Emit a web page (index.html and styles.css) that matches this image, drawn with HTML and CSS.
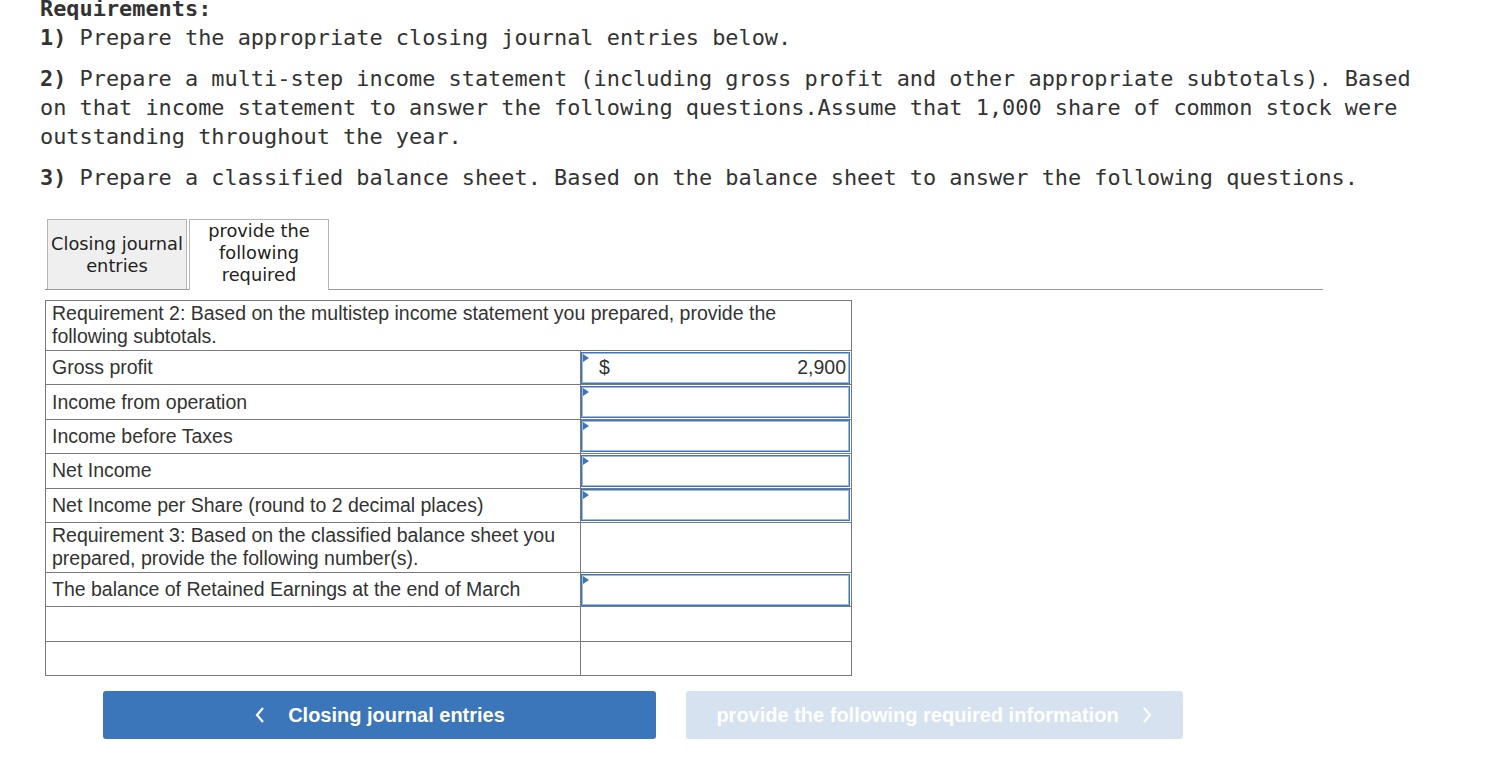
FILE: index.html
```html
<!DOCTYPE html>
<html>
<head>
<meta charset="utf-8">
<link rel="stylesheet" href="styles.css">
</head>
<body>
<div class="req">
  <p class="req-line"><b>Requirements:</b><br><b>1)</b> Prepare the appropriate closing journal entries below.</p>
  <p class="req-line"><b>2)</b> Prepare a multi-step income statement (including gross profit and other appropriate subtotals). Based<br>on that income statement to answer the following questions.Assume that 1,000 share of common stock were<br>outstanding throughout the year.</p>
  <p class="req-line"><b>3)</b> Prepare a classified balance sheet. Based on the balance sheet to answer the following questions.</p>
</div>

<div class="tabs">
  <div class="tab">Closing journal<br>entries</div>
  <div class="tab active">provide the<br>following<br>required</div>
</div>

<table class="grid">
  <colgroup>
    <col class="c1">
    <col class="c2">
  </colgroup>
  <tr class="tall">
    <td colspan="2" class="txt">Requirement 2: Based on the multistep income statement you prepared, provide the<br>following subtotals.</td>
  </tr>
  <tr>
    <td class="label">Gross profit</td>
    <td class="inp"><div class="field"><span class="flag"></span><span class="cur">$</span><span class="val">2,900</span></div></td>
  </tr>
  <tr>
    <td class="label">Income from operation</td>
    <td class="inp"><div class="field"><span class="flag"></span></div></td>
  </tr>
  <tr>
    <td class="label">Income before Taxes</td>
    <td class="inp"><div class="field"><span class="flag"></span></div></td>
  </tr>
  <tr>
    <td class="label">Net Income</td>
    <td class="inp"><div class="field"><span class="flag"></span></div></td>
  </tr>
  <tr>
    <td class="label">Net Income per Share (round to 2 decimal places)</td>
    <td class="inp"><div class="field"><span class="flag"></span></div></td>
  </tr>
  <tr class="tall">
    <td class="txt">Requirement 3: Based on the classified balance sheet you<br>prepared, provide the following number(s).</td>
    <td></td>
  </tr>
  <tr>
    <td class="label">The balance of Retained Earnings at the end of March</td>
    <td class="inp"><div class="field"><span class="flag"></span></div></td>
  </tr>
  <tr>
    <td class="label"></td>
    <td></td>
  </tr>
  <tr>
    <td class="label"></td>
    <td></td>
  </tr>
</table>

<div class="nav">
  <div class="btn prev">
    <svg class="chev" width="12" height="18" viewBox="0 0 12 18"><path d="M9 2 L3 9 L9 16" fill="none" stroke="#fff" stroke-width="2.2"/></svg>
    <span>Closing journal entries</span>
  </div>
  <div class="btn next">
    <span>provide the following required information</span>
    <svg class="chev" width="12" height="18" viewBox="0 0 12 18"><path d="M3 2 L9 9 L3 16" fill="none" stroke="#fff" stroke-width="2.2"/></svg>
  </div>
</div>
</body>
</html>
```

FILE: styles.css
```css
html, body {
  margin: 0;
  padding: 0;
  background: #fff;
}

.req {
  margin-top: -6px;
  padding-left: 40px;
  font-family: "DejaVu Sans Mono", "Liberation Mono", monospace;
  font-size: 21.9px;
  line-height: 29px;
  color: #333;
  white-space: nowrap;
}

.req-line {
  margin: 0 0 12px 0;
}

.req b {
  font-weight: bold;
}

.tabs {
  display: flex;
  align-items: flex-end;
  margin: 27px 0 0 45px;
  width: 1276px;
  height: 70px;
  border-bottom: 1px solid #999;
  padding-left: 2px;
  gap: 2px;
  font-family: "DejaVu Sans", Verdana, sans-serif;
  font-size: 17.8px;
  line-height: 22px;
  color: #222;
}

.tab {
  box-sizing: border-box;
  width: 140px;
  height: 70px;
  display: flex;
  align-items: center;
  justify-content: center;
  text-align: center;
  background: #efefef;
  border: 1px solid #b5b5b5;
  border-bottom: none;
  white-space: nowrap;
}

.tab.active {
  background: #fff;
  height: 71px;
  margin-bottom: -1px;
  padding-bottom: 4px;
}

.grid {
  margin: 10px 0 0 45px;
  border-collapse: collapse;
  width: 806px;
  font-family: "Liberation Sans", Arial, sans-serif;
  font-size: 19.5px;
  color: #333;
  table-layout: fixed;
}

.grid col.c1 {
  width: 535px;
}

.grid col.c2 {
  width: 271px;
}

.grid td {
  border: 1px solid #7a7a7a;
  padding: 0;
  height: 34.4px;
  box-sizing: border-box;
  white-space: nowrap;
}

.grid tr.tall td {
  height: 50px;
}

.grid td.txt {
  padding: 1px 6px 2px 6px;
  line-height: 23px;
  vertical-align: top;
}

.grid td.label {
  padding: 0 6px;
  vertical-align: middle;
}

.grid td.inp {
  padding: 0;
  vertical-align: middle;
}

.field {
  position: relative;
  box-sizing: border-box;
  height: 32px;
  margin: 0 1px 0 0;
  border: 1px solid #3e76ba;
  box-shadow: inset 0 0 0 1px #9bbbe0;
  display: flex;
  align-items: center;
  padding: 0 3px 0 17px;
}

.flag {
  position: absolute;
  left: 1px;
  top: 1px;
  width: 0;
  height: 0;
  border-top: 4px solid transparent;
  border-bottom: 4px solid transparent;
  border-left: 6px solid #3e76ba;
}

.cur {
  flex: none;
}

.val {
  margin-left: auto;
}

.nav {
  display: flex;
  gap: 30px;
  margin: 15px 0 0 103px;
}

.btn {
  box-sizing: border-box;
  height: 48px;
  border-radius: 3px;
  display: flex;
  align-items: center;
  justify-content: center;
  gap: 22px;
  font-family: "Liberation Sans", Arial, sans-serif;
  font-weight: bold;
  font-size: 20px;
  color: #fff;
}

.btn.prev {
  width: 553px;
  background: #3a76b9;
}

.btn.next {
  width: 497px;
  background: #d6e2f0;
}

.chev {
  display: block;
}
```
